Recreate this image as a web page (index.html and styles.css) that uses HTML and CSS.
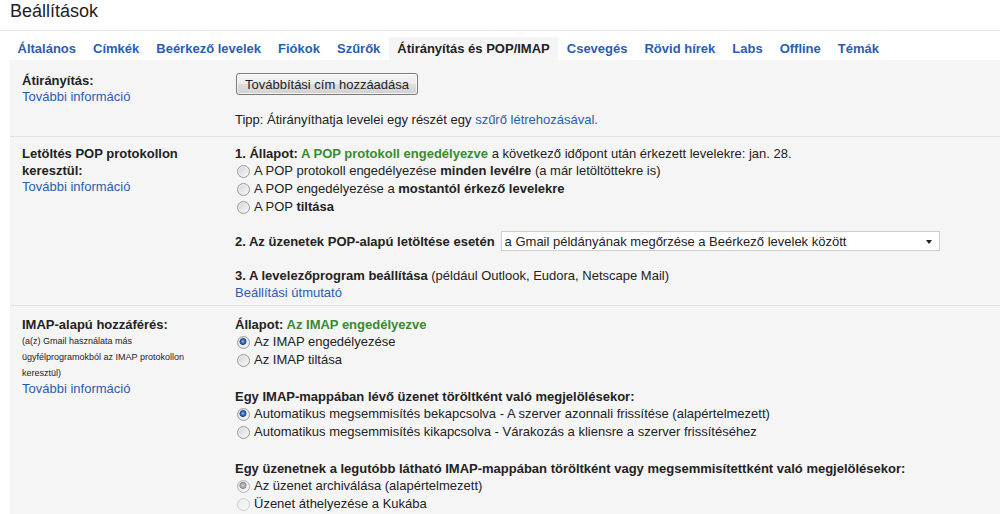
FILE: index.html
```html
<!DOCTYPE html>
<html lang="hu">
<head>
<meta charset="utf-8">
<title>Beállítások</title>
<link rel="stylesheet" href="styles.css">
</head>
<body>
<h1 class="page-title">Beállítások</h1>
<nav class="tabs">
  <a class="tab" href="#">Általános</a>
  <a class="tab" href="#">Címkék</a>
  <a class="tab" href="#">Beérkező levelek</a>
  <a class="tab" href="#">Fiókok</a>
  <a class="tab" href="#">Szűrők</a>
  <span class="tab tab-active">Átirányítás és POP/IMAP</span>
  <a class="tab" href="#">Csevegés</a>
  <a class="tab" href="#">Rövid hírek</a>
  <a class="tab" href="#">Labs</a>
  <a class="tab" href="#">Offline</a>
  <a class="tab" href="#">Témák</a>
</nav>
<main class="panel">
  <section class="row row-forward">
    <div class="row-label">
      <div class="label-title">Átirányítás:</div>
      <a class="link block-link" href="#">További információ</a>
    </div>
    <div class="row-body">
      <button class="btn" type="button">Továbbítási cím hozzáadása</button>
      <p class="tip">Tipp: Átirányíthatja levelei egy részét egy <a class="link" href="#">szűrő létrehozásával.</a></p>
    </div>
  </section>

  <section class="row row-pop">
    <div class="row-label">
      <div class="label-title">Letöltés POP protokollon keresztül:</div>
      <a class="link block-link" href="#">További információ</a>
    </div>
    <div class="row-body">
      <div class="group">
        <p class="line"><b>1. Állapot: <span class="ok">A POP protokoll engedélyezve</span></b> a következő időpont után érkezett levelekre: jan. 28.</p>
        <label class="radio-line"><input class="radio" type="radio" name="pop"><span>A POP protokoll engedélyezése <b>minden levélre</b> (a már letöltöttekre is)</span></label>
        <label class="radio-line"><input class="radio" type="radio" name="pop"><span>A POP engedélyezése a <b>mostantól érkező levelekre</b></span></label>
        <label class="radio-line"><input class="radio" type="radio" name="pop"><span>A POP <b>tiltása</b></span></label>
      </div>
      <div class="group group-select">
        <b>2. Az üzenetek POP-alapú letöltése esetén</b>
        <span class="select-wrap">
          <select class="select">
            <option>a Gmail példányának megőrzése a Beérkező levelek között</option>
          </select>
        </span>
      </div>
      <div class="group group-after-select">
        <p class="line"><b>3. A levelezőprogram beállítása</b> (például Outlook, Eudora, Netscape Mail)</p>
        <a class="link line-link" href="#">Beállítási útmutató</a>
      </div>
    </div>
  </section>

  <section class="row row-imap">
    <div class="row-label">
      <div class="label-title">IMAP-alapú hozzáférés:</div>
      <div class="label-note">(a(z) Gmail használata más ügyfélprogramokból az IMAP protokollon keresztül)</div>
      <a class="link block-link" href="#">További információ</a>
    </div>
    <div class="row-body">
      <div class="group">
        <p class="line"><b>Állapot: <span class="ok">Az IMAP engedélyezve</span></b></p>
        <label class="radio-line"><input class="radio" type="radio" name="imap" checked><span>Az IMAP engedélyezése</span></label>
        <label class="radio-line"><input class="radio" type="radio" name="imap"><span>Az IMAP tiltása</span></label>
      </div>
      <div class="group">
        <p class="line"><b>Egy IMAP-mappában lévő üzenet töröltként való megjelölésekor:</b></p>
        <label class="radio-line"><input class="radio" type="radio" name="expunge" checked><span>Automatikus megsemmisítés bekapcsolva - A szerver azonnali frissítése (alapértelmezett)</span></label>
        <label class="radio-line"><input class="radio" type="radio" name="expunge"><span>Automatikus megsemmisítés kikapcsolva - Várakozás a kliensre a szerver frissítéséhez</span></label>
      </div>
      <div class="group">
        <p class="line"><b>Egy üzenetnek a legutóbb látható IMAP-mappában töröltként vagy megsemmisítettként való megjelölésekor:</b></p>
        <label class="radio-line"><input class="radio" type="radio" name="deleted" checked disabled><span>Az üzenet archiválása (alapértelmezett)</span></label>
        <label class="radio-line"><input class="radio" type="radio" name="deleted" disabled><span>Üzenet áthelyezése a Kukába</span></label>
      </div>
    </div>
  </section>
</main>
</body>
</html>
```

FILE: styles.css
```css
html, body {
  margin: 0;
  background: #fff;
}

body {
  font-family: "Liberation Sans", Arial, sans-serif;
  font-size: 13px;
  color: #222;
}

.page-title {
  margin: 0;
  height: 30px;
  padding-left: 10px;
  font-size: 18px;
  line-height: 22px;
  font-weight: normal;
  color: #222;
  border-bottom: 1px solid #e5e5e5;
}

.tabs {
  display: flex;
  padding: 6px 0 0 9px;
}

.tab {
  padding: 4px 8.5px 3px;
  line-height: 16px;
  font-weight: bold;
  color: #2a5db0;
  text-decoration: none;
  white-space: nowrap;
}

.tab-active {
  background: #f5f5f5;
  color: #222;
}

.panel {
  display: block;
  margin-left: 10px;
  background: #f5f5f5;
}

.row {
  display: grid;
  grid-template-columns: 213px 1fr;
  padding-left: 12px;
  border-bottom: 1px solid #e3e3e3;
}

.row-forward { padding-top: 12px; padding-bottom: 8px; }
.row-pop { padding-top: 8px; padding-bottom: 4px; }
.row-imap { padding-top: 10px; padding-bottom: 4px; border-bottom: 0; }

.row-label {
  padding-right: 25px;
}

.label-title {
  font-weight: bold;
  line-height: 17px;
}

.label-note {
  font-size: 9px;
  line-height: 16px;
}

.link {
  color: #2a5db0;
  text-decoration: none;
}

.block-link {
  display: block;
  line-height: 16px;
}

.row-body {
  min-width: 0;
}

.btn {
  display: block;
  margin: 1px 0 0 1px;
  height: 22px;
  padding: 0 8px;
  font-family: inherit;
  font-size: 13px;
  color: #222;
  border: 1px solid #7a7a7a;
  border-radius: 3px;
  background: linear-gradient(#f4f4f4 0%, #ececec 48%, #dedede 52%, #d2d2d2 100%);
  box-shadow: inset 0 0 0 1px rgba(255,255,255,0.7);
}

.tip {
  margin: 16px 0 0;
  line-height: 17px;
}

.group + .group {
  margin-top: 19px;
}

.line {
  margin: 0;
  line-height: 17px;
}

.line-link {
  display: block;
  line-height: 17px;
}

.ok {
  color: #3a8a2f;
}

.radio-line {
  display: flex;
  align-items: center;
  height: 18px;
  line-height: 18px;
  white-space: nowrap;
}

.radio {
  appearance: none;
  -webkit-appearance: none;
  box-sizing: border-box;
  flex: none;
  width: 13px;
  height: 13px;
  margin: 0 4px 0 2px;
  border: 1px solid #999;
  border-radius: 50%;
  background: linear-gradient(135deg, #d2d2d2 0%, #e8e8e8 55%, #f8f8f8 100%);
  box-shadow: inset 0 0 0 1px #f0f0f0;
}

.radio:checked {
  background:
    radial-gradient(circle at 45% 40%, #9cc4ee 0, #3f75bf 1.6px, #1d4585 3.2px, rgba(29,69,133,0) 3.8px),
    linear-gradient(135deg, #d2d2d2 0%, #e8e8e8 55%, #f8f8f8 100%);
}

.radio:disabled {
  border-color: #cdcdcd;
  background: linear-gradient(135deg, #ececec 0%, #f3f3f3 60%, #f8f8f8 100%);
  box-shadow: none;
}

.radio:disabled:checked {
  border-color: #b3b3b3;
  background:
    radial-gradient(circle at 45% 40%, #d8d8d8 0, #a6a6a6 2px, #8c8c8c 3.2px, rgba(140,140,140,0) 3.8px),
    linear-gradient(135deg, #e0e0e0 0%, #f0f0f0 60%, #f8f8f8 100%);
}

.group.group-select {
  display: flex;
  align-items: center;
  gap: 6px;
  height: 20px;
  margin-top: 15px;
  white-space: nowrap;
}

.group.group-after-select {
  margin-top: 16px;
}

.select-wrap {
  position: relative;
  display: block;
}

.select-wrap::after {
  content: "";
  position: absolute;
  right: 8px;
  top: 9px;
  border-left: 3.5px solid transparent;
  border-right: 3.5px solid transparent;
  border-top: 4px solid #222;
  pointer-events: none;
}

.select {
  appearance: none;
  -webkit-appearance: none;
  display: block;
  box-sizing: border-box;
  width: 439px;
  height: 20px;
  margin: 0;
  padding: 0 20px 0 3px;
  font-family: inherit;
  font-size: 13px;
  color: #222;
  background: #fff;
  border: 1px solid #cfcfcf;
  border-radius: 0;
}
```
